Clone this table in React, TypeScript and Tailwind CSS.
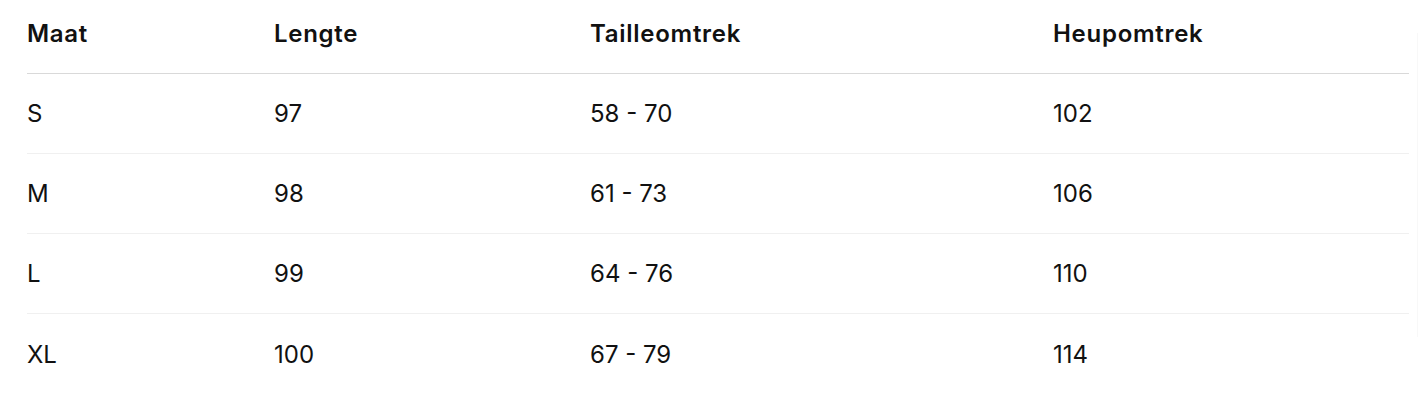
import React from "react";

const rows = [
  ["S", "97", "58 - 70", "102"],
  ["M", "98", "61 - 73", "106"],
  ["L", "99", "64 - 76", "110"],
  ["XL", "100", "67 - 79", "114"],
];

export default function App() {
  return (
    <div className="w-[1424px] h-[418px] bg-white flex" style={{ fontFamily: "Inter, 'Noto Sans', sans-serif" }}>
      <div className="w-[1409px] pl-[27px]">
        <div className="grid grid-cols-[247px_316px_463px_1fr] h-[74px] border-b border-[#d9d9d9] text-[24px] leading-[32px] font-semibold text-[#111] pt-[18px] tracking-[0.03em]">
          <div>Maat</div>
          <div>Lengte</div>
          <div>Tailleomtrek</div>
          <div>Heupomtrek</div>
        </div>
        {rows.map((r, i) => (
          <div
            key={i}
            className={`grid grid-cols-[247px_316px_463px_1fr] h-[80px] items-center text-[24px] leading-[32px] text-[#111] pt-[1px] ${i < rows.length - 1 ? "border-b border-[#f0f0f0]" : ""}`}
          >
            {r.map((c, j) => (
              <div key={j}>{c}</div>
            ))}
          </div>
        ))}
      </div>
      <div className="ml-[8px] mt-[33px] h-[304px] w-px bg-[#f8f8f8]" />
    </div>
  );
}
